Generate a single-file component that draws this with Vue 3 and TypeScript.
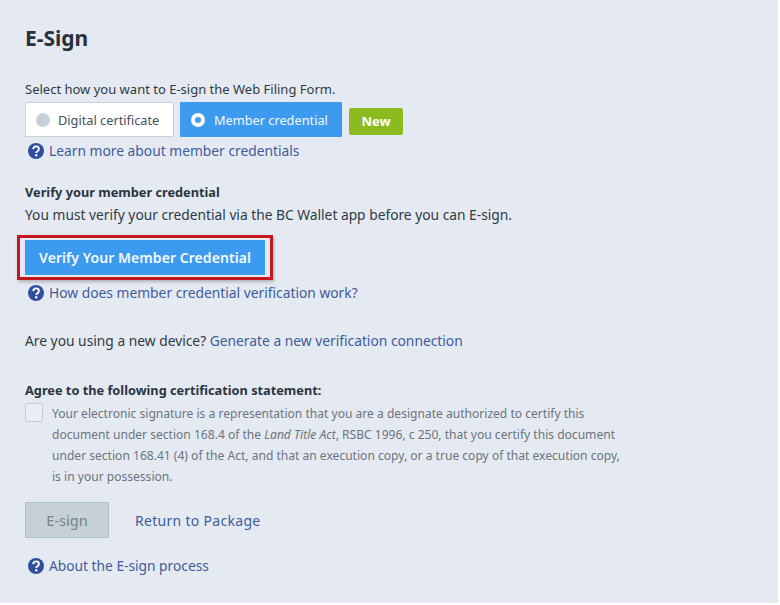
<script setup lang="ts">
const statement = {
  before: 'Your electronic signature is a representation that you are a designate authorized to certify this document under section 168.4 of the ',
  act: 'Land Title Act',
  after: ', RSBC 1996, c 250, that you certify this document under section 168.41 (4) of the Act, and that an execution copy, or a true copy of that execution copy, is in your possession.',
}
</script>

<template>
  <main class="page">
    <h1 class="title">E-Sign</h1>
    <p class="select-label">Select how you want to E-sign the Web Filing Form.</p>
    <div class="options">
      <div class="option option-off"><span class="dot"></span>Digital certificate</div>
      <div class="option option-on"><span class="ring"></span>Member credential</div>
      <span class="badge">New</span>
    </div>
    <a class="help first-help">
      <svg class="q" viewBox="0 0 16 16" aria-hidden="true"><circle cx="8" cy="8" r="8" fill="#2f4f9e" /><path d="M5.2 6.1C5.3 4.4 6.5 3.4 8.1 3.4c1.7 0 2.8 1 2.8 2.5 0 1.1-.6 1.7-1.5 2.3-.8.5-1.1.9-1.1 1.7" fill="none" stroke="#fff" stroke-width="1.9" /><circle cx="8.2" cy="12.2" r="1.2" fill="#fff" /></svg>
      Learn more about member credentials
    </a>

    <h2 class="verify-title">Verify your member credential</h2>
    <p class="verify-text">You must verify your credential via the BC Wallet app before you can E-sign.</p>
    <div class="highlight"><button class="verify-btn" type="button">Verify Your Member Credential</button></div>
    <a class="help second-help">
      <svg class="q" viewBox="0 0 16 16" aria-hidden="true"><circle cx="8" cy="8" r="8" fill="#2f4f9e" /><path d="M5.2 6.1C5.3 4.4 6.5 3.4 8.1 3.4c1.7 0 2.8 1 2.8 2.5 0 1.1-.6 1.7-1.5 2.3-.8.5-1.1.9-1.1 1.7" fill="none" stroke="#fff" stroke-width="1.9" /><circle cx="8.2" cy="12.2" r="1.2" fill="#fff" /></svg>
      How does member credential verification work?
    </a>

    <p class="device">Are you using a new device? <a class="link">Generate a new verification connection</a></p>

    <h2 class="agree-title">Agree to the following certification statement:</h2>
    <div class="statement">
      <span class="check"></span>
      <p class="statement-text">{{ statement.before }}<em>{{ statement.act }}</em>{{ statement.after }}</p>
    </div>

    <div class="actions">
      <button class="esign" type="button" disabled>E-sign</button>
      <a class="return">Return to Package</a>
    </div>
    <a class="help about">
      <svg class="q" viewBox="0 0 16 16" aria-hidden="true"><circle cx="8" cy="8" r="8" fill="#2f4f9e" /><path d="M5.2 6.1C5.3 4.4 6.5 3.4 8.1 3.4c1.7 0 2.8 1 2.8 2.5 0 1.1-.6 1.7-1.5 2.3-.8.5-1.1.9-1.1 1.7" fill="none" stroke="#fff" stroke-width="1.9" /><circle cx="8.2" cy="12.2" r="1.2" fill="#fff" /></svg>
      About the E-sign process
    </a>
  </main>
</template>

<style>
html, body { margin: 0; background: #fff; }
</style>

<style scoped>
.page {
  box-sizing: border-box;
  width: 778px;
  height: 603px;
  padding: 25px 0 0 25px;
  background: #e5eaf2;
  color: #2f3a44;
  font-family: "Noto Sans", sans-serif;
  font-size: 13px;
  overflow: hidden;
}
.title { margin: 0; font-size: 21px; line-height: 27px; font-weight: 700; color: #27323c; }
.select-label { margin: 27px 0 0; line-height: 20px; }
.options { display: flex; align-items: flex-start; margin-top: 3px; }
.option {
  box-sizing: border-box;
  display: flex;
  align-items: center;
  height: 35px;
  font-size: 12.75px;
  border-radius: 1px;
}
.option-off { width: 149px; padding-left: 10px; background: #fff; border: 1px solid #c9d0d6; color: #44505a; }
.option-on { width: 162px; margin-left: 6px; padding-left: 11px; background: #3c9bee; color: #f2f8fe; }
.dot { width: 14px; height: 14px; margin-right: 8px; border-radius: 50%; background: #c5d0d8; }
.ring { box-sizing: border-box; width: 14px; height: 14px; margin-right: 9px; border-radius: 50%; border: 4px solid #fff; background: #3c9bee; }
.badge {
  margin: 6px 0 0 7px;
  width: 54px;
  height: 27px;
  line-height: 27px;
  text-align: center;
  border-radius: 2px;
  background: #8cbb1f;
  color: #fff;
  font-size: 13px;
  font-weight: 700;
}
.help { display: flex; align-items: center; gap: 5px; color: #3e5c9c; font-size: 13.8px; line-height: 20px; }
.q { width: 16px; height: 16px; flex: none; }
.first-help { margin: 4px 0 0 3px; }
.verify-title { margin: 22px 0 0; font-size: 12.75px; line-height: 18px; font-weight: 700; color: #2b353f; }
.verify-text { margin: 4px 0 0; font-size: 13.78px; line-height: 20px; }
.highlight {
  box-sizing: border-box;
  width: 256px;
  height: 45px;
  margin: 10px 0 0 -8px;
  padding: 2px 0 2px 5px;
  border: 3px solid #c4161c;
  box-shadow: 1px 2px 3px rgba(90, 70, 80, .35);
}
.verify-btn {
  display: block;
  width: 240px;
  height: 35px;
  padding: 0;
  border: 0;
  background: #3c9bee;
  color: #f4f9ff;
  font: 600 14px "Noto Sans", sans-serif;
  letter-spacing: .06px;
}
.second-help { margin: 3px 0 0 3px; }
.device { margin: 28px 0 0; font-size: 13.8px; line-height: 20px; }
.link { color: #3e5c9c; }
.agree-title { margin: 30px 0 0; font-size: 12.75px; line-height: 18px; font-weight: 700; color: #2b353f; }
.statement { display: flex; margin-top: 4px; width: 600px; }
.check { box-sizing: border-box; flex: none; width: 18px; height: 19px; margin-right: 9px; border: 1px solid #c5ccd2; border-radius: 2px; background: #e9eef4; }
.statement-text { margin: 0; color: #6b747c; font-size: 12.07px; line-height: 21px; }
.actions { display: flex; align-items: center; margin-top: 15px; }
.esign {
  box-sizing: border-box;
  width: 84px;
  height: 36px;
  padding: 0;
  border: 1px solid #b4c0c7;
  background: #c5d0d7;
  color: #76838c;
  font: 14.5px "Noto Sans", sans-serif;
}
.return { margin-left: 26px; color: #3e5c9c; font-size: 14px; letter-spacing: .3px; }
.about { margin: 18px 0 0 3px; font-size: 13.75px; }
</style>
